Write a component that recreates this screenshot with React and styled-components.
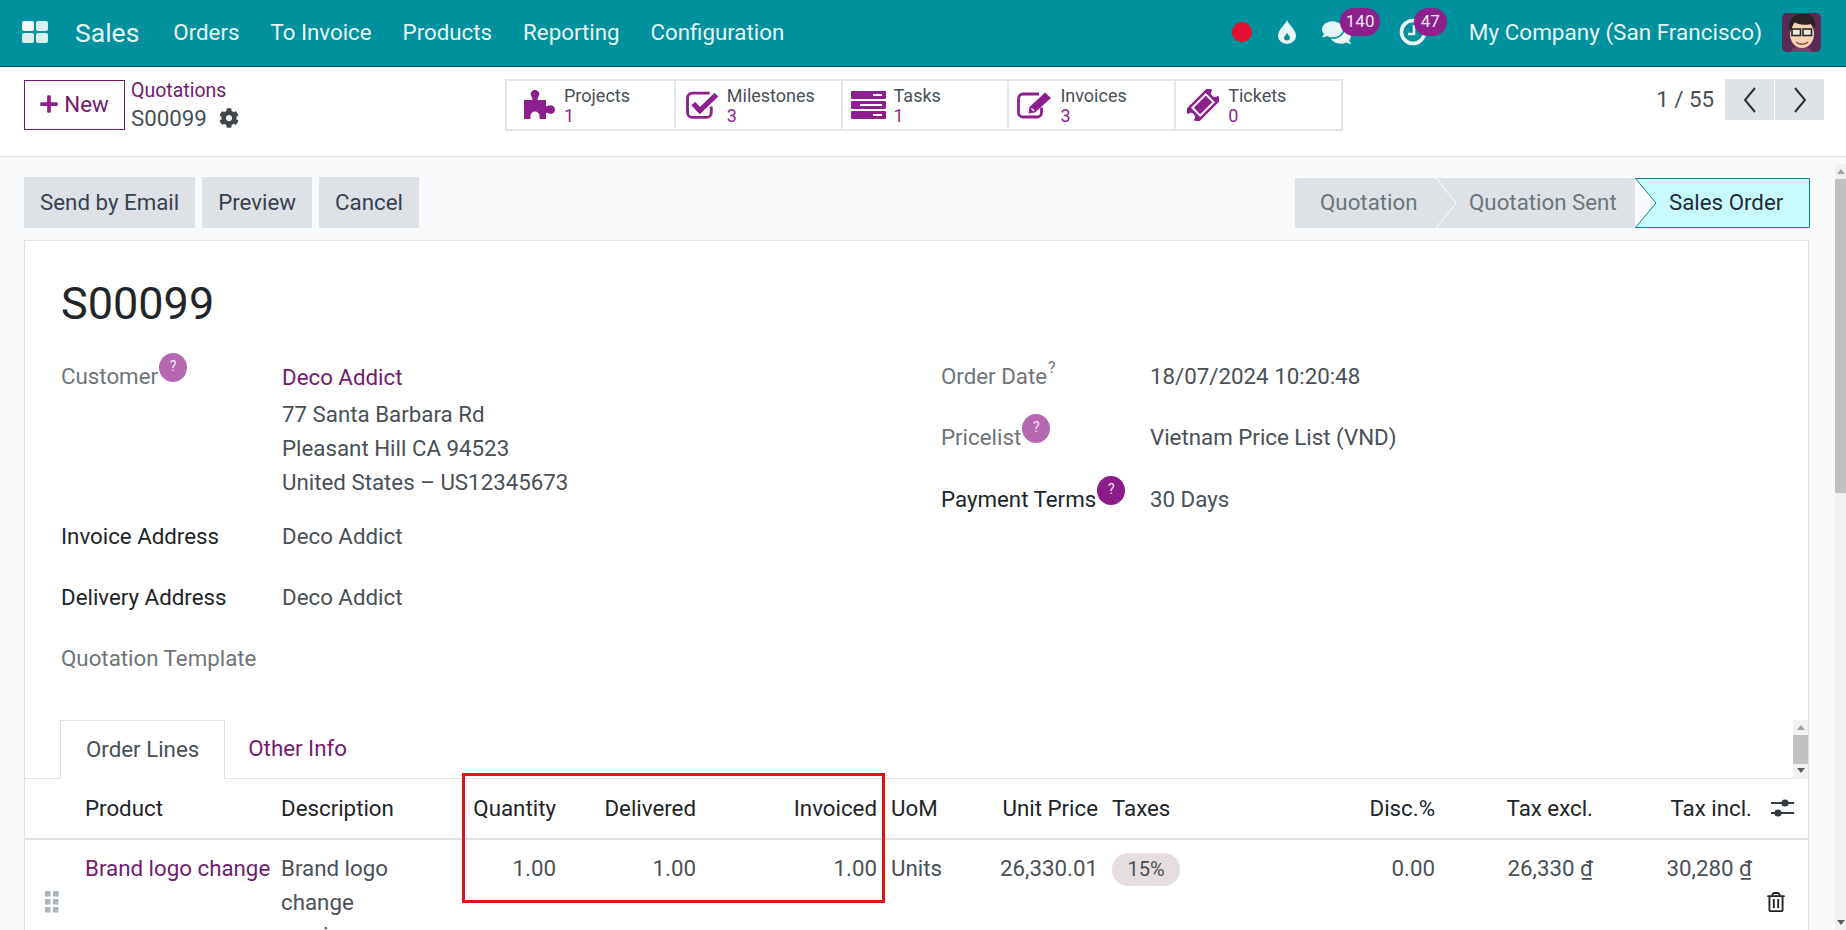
import React from 'react'
import styled, { createGlobalStyle } from 'styled-components'
import { FaPlus, FaCog, FaComments, FaRegTrashAlt } from 'react-icons/fa'

const GlobalStyle = createGlobalStyle`
  html, body {
    margin: 0;
    height: 100%;
    overflow: hidden;
    background: #f9fafb;
    font-family: Roboto, "Liberation Sans", sans-serif;
    font-size: 22.3px;
    color: #495057;
  }
  * { box-sizing: border-box; }
`

const PURPLE = '#8d1f8f'
const LINK = '#741a72'

const Page = styled.div`
  height: 930px;
  display: flex;
  flex-direction: column;
  overflow: hidden;
`

const NavBar = styled.header`
  flex: none;
  height: 67px;
  background: #00919e;
  border-bottom: 1px solid #04565e;
  display: flex;
  align-items: center;
  justify-content: space-between;
  padding: 0 25px 2px 22px;
  color: #e8f6f7;
`

const NavLeft = styled.nav`
  display: flex;
  align-items: center;
  gap: 31px;
`

const AppsSlot = styled.span`
  display: flex;
`

const Brand = styled.span`
  font-size: 26.5px;
  margin: 0 3px 0 -4px;
`

const NavItem = styled.span`
  white-space: nowrap;
`

const CompanyName = styled.span`
  font-size: 22.5px;
  white-space: nowrap;
`

const NavRight = styled.div`
  display: flex;
  align-items: center;
`

const Systray = styled.span`
  position: relative;
  display: flex;
  margin-right: ${p => p.$gap}px;
`

const AvatarSlot = styled.span`
  display: flex;
  margin-left: 20px;
`

const CountBadge = styled.span`
  position: absolute;
  top: ${p => p.$top}px;
  left: ${p => p.$left}px;
  height: 28px;
  padding: 0 ${p => p.$pad}px;
  border-radius: 14px;
  background: ${PURPLE};
  color: #f3e6f3;
  font-size: 17px;
  line-height: 26px;
`

const RedDot = styled.span`
  width: 20px;
  height: 20px;
  border-radius: 50%;
  background: #e3102f;
`

const ControlPanel = styled.section`
  flex: none;
  height: 90px;
  background: #fff;
  border-bottom: 1px solid #dee2e6;
  display: flex;
  align-items: flex-start;
  padding: 12px 22px 0 24px;
`

const PanelLeft = styled.div`
  width: 481px;
  display: flex;
  align-items: flex-start;
`

const NewButton = styled.button`
  width: 101px;
  height: 50px;
  margin-top: 1px;
  background: #fff;
  border: 1px solid ${LINK};
  color: ${LINK};
  font: inherit;
  display: flex;
  align-items: center;
  justify-content: center;
  gap: 5px;
  padding: 0 1px 2px 0;
  svg { color: ${PURPLE}; font-size: 20px; }
`

const Crumbs = styled.div`
  margin-left: 6px;
  display: flex;
  flex-direction: column;
`

const CrumbLink = styled.span`
  color: ${LINK};
  font-size: 19.5px;
  line-height: 24px;
`

const CrumbCurrent = styled.span`
  display: flex;
  align-items: center;
  gap: 12px;
  line-height: 30px;
  svg { font-size: 20px; color: #3f474f; }
`

const ButtonBox = styled.div`
  width: 838px;
  height: 52px;
  display: flex;
  border: 2px solid #e5e7ea;
`

const BoxItem = styled.div`
  flex: 0 0 20%;
  display: flex;
  align-items: center;
  gap: ${p => p.$gap}px;
  padding-left: ${p => p.$inset}px;
  font-size: 18px;
  line-height: 20px;
  & + & { border-left: 2px solid #e5e7ea; }
  svg { flex: none; color: ${PURPLE}; }
`

const BoxText = styled.div`
  display: flex;
  flex-direction: column;
  padding-top: 1px;
`

const BoxCount = styled.span`
  color: ${PURPLE};
`

const Pager = styled.div`
  margin-left: auto;
  display: flex;
  align-items: center;
  gap: 11px;
  height: 41px;
`

const PagerText = styled.span`
  margin-top: -2px;
`

const PagerButtons = styled.div`
  display: flex;
  gap: 1px;
`

const PagerButton = styled.span`
  width: 49px;
  height: 41px;
  background: #dfe2e6;
  display: flex;
  align-items: center;
  justify-content: center;
`

const Content = styled.main`
  flex: 1;
  min-height: 0;
  display: flex;
`

const MainColumn = styled.div`
  width: 1835px;
  padding: 20px 26px 0 24px;
`

const ActionRow = styled.div`
  display: flex;
  justify-content: space-between;
  align-items: flex-end;
  height: 51px;
`

const Actions = styled.div`
  display: flex;
  gap: 7px;
  height: 51px;
`

const ActionButton = styled.button`
  background: #dee2e6;
  border: 0;
  padding: 0 16px 2px;
  font: inherit;
  color: #374151;
`

const StatusBar = styled.div`
  display: flex;
  height: 50px;
  margin-right: -1px;
`

const Step = styled.div`
  position: relative;
  width: ${p => p.$w}px;
  padding-left: ${p => p.$inset}px;
  line-height: 49px;
  background: ${p => (p.$active ? 'transparent' : '#dee2e6')};
  color: ${p => (p.$active ? '#1f2d36' : '#6c757d')};
  white-space: nowrap;
  span { position: relative; }
`

const StepShape = styled.svg`
  position: absolute;
  top: 0;
  left: ${p => p.$left}px;
  z-index: ${p => p.$z};
`

const Sheet = styled.div`
  margin-top: 12px;
  background: #fff;
  border: 1px solid #dee2e6;
  border-bottom: 0;
  height: 700px;
`

const Head = styled.div`
  padding: 33px 0 0 36px;
`

const Title = styled.h1`
  margin: 0;
  font-size: 45px;
  font-weight: 400;
  line-height: 60px;
  color: #212529;
`

const FormGrid = styled.div`
  margin-top: 25px;
  display: grid;
  grid-template-columns: 880px 1fr;
  height: 361px;
`

const Row = styled.div`
  display: grid;
  grid-template-columns: ${p => p.$label}px 1fr;
  line-height: 34px;
  margin-bottom: ${p => p.$after}px;
`

const Label = styled.div`
  display: flex;
  align-items: flex-start;
  color: ${p => (p.$strong ? '#212529' : '#6f7479')};
`

const Help = styled.span`
  width: 28px;
  height: 29px;
  margin: -6px 0 0 1px;
  border-radius: 50%;
  background: ${p => (p.$strong ? '#8d1c8a' : '#b568b0')};
  color: #f6e9f5;
  font-size: 14px;
  line-height: 27px;
  text-align: center;
`

const Sup = styled.sup`
  font-size: 16px;
  line-height: 16px;
  margin: 1px 0 0 1px;
  vertical-align: baseline;
`

const CustomerLink = styled.a`
  color: ${LINK};
  display: block;
  margin: 1px 0 3px;
`

const TabRow = styled.div`
  display: flex;
  justify-content: space-between;
  height: 59px;
  padding-left: 35px;
  border-bottom: 1px solid #dee2e6;
`

const Tabs = styled.div`
  display: flex;
`

const Tab = styled.div`
  height: 59px;
  padding: 0 ${p => (p.$active ? 25 : 23)}px;
  line-height: 57px;
  color: ${p => (p.$active ? '#495057' : LINK)};
  ${p => p.$active && `
    background: #fff;
    border: 1px solid #dee2e6;
    border-bottom: 0;
  `}
`

const Scrollbar = styled.div`
  flex: none;
  width: ${p => p.$w}px;
  margin-top: ${p => p.$top}px;
  background: #f1f1f1;
  display: flex;
  flex-direction: column;
  align-items: center;
  height: ${p => p.$h}px;
`

const Thumb = styled.div`
  align-self: stretch;
  height: ${p => p.$h}px;
  background: #c1c1c1;
`

const ScrollRest = styled.div`
  flex: 1;
`

const Arrow = styled.span`
  width: 0;
  height: 0;
  margin: ${p => p.$m};
  border-left: 4px solid transparent;
  border-right: 4px solid transparent;
  ${p => (p.$down ? 'border-top: 5px solid #606060;' : 'border-bottom: 5px solid #a3a3a3;')}
`

const TableWrap = styled.div`
  position: relative;
`

const Table = styled.table`
  width: 1784px;
  table-layout: fixed;
  border-collapse: collapse;
`

const Col = styled.col`
  width: ${p => p.$w}px;
`

const Th = styled.th`
  height: 60px;
  padding: 0 7px 1px;
  font-weight: 400;
  color: #212529;
  text-align: ${p => (p.$right ? 'right' : 'left')};
  border-bottom: 2px solid #dee2e6;
  white-space: nowrap;
`

const Td = styled.td`
  padding: 12px 7px 10px;
  line-height: 33.5px;
  vertical-align: ${p => (p.$middle ? 'middle' : 'top')};
  text-align: ${p => (p.$right ? 'right' : 'left')};
  color: ${p => (p.$link ? LINK : '#495057')};
  white-space: nowrap;
`

const TaxBadge = styled.span`
  display: inline-block;
  width: 68px;
  height: 33px;
  border-radius: 16px;
  background: #e6dede;
  font-size: 20px;
  line-height: 33px;
  text-align: center;
`

const Annotation = styled.div`
  position: absolute;
  left: 437px;
  top: -6px;
  width: 423px;
  height: 130px;
  border: 3px solid #e31212;
`

const CenterIcon = styled.div`
  display: flex;
  justify-content: center;
  padding-right: ${p => p.$inset || 0}px;
  color: #212529;
`

const AppsIcon = () => (
  <svg width="26" height="22" viewBox="0 0 26 22">
    <rect x="0" y="0" width="12" height="10" rx="2" fill="#f4fbfb" />
    <rect x="14" y="0" width="12" height="10" rx="2" fill="#d9f0f1" />
    <rect x="0" y="12" width="12" height="10" rx="2" fill="#d9f0f1" />
    <rect x="14" y="12" width="12" height="10" rx="2" fill="#d9f0f1" />
  </svg>
)

const DropIcon = () => (
  <svg width="18" height="24" viewBox="0 0 18 24">
    <path d="M9 0 C11 5 18 10 18 15.5 A9 8.5 0 0 1 0 15.5 C0 10 7 5 9 0 Z" fill="#e8f6f7" />
    <path d="M9 13 C10 15 12 16 12 17.5 A3 3 0 0 1 6 17.5 C6 16 8 15 9 13 Z" fill="#00919e" />
  </svg>
)

const ClockIcon = () => (
  <svg width="28" height="28" viewBox="0 0 28 28" fill="none" stroke="#e8f6f7">
    <circle cx="14" cy="14" r="11.5" strokeWidth="3.6" />
    <path d="M15 7 V16 H9" strokeWidth="2.6" />
  </svg>
)

const PuzzleIcon = () => (
  <svg width="32" height="30" viewBox="0 0 32 30" fill={PURPLE}>
    <path d="M0 10 H8 C9 10 8 8 7.5 6.5 A4.2 4.2 0 1 1 14.5 6.5 C14 8 13 10 14 10 H22 V15.5 C22 17 24 16 25 15.6 A4.3 4.3 0 1 1 25 23.5 C24 23 22 22 22 23.5 V29 H16 C15 29 16 27.5 15.5 26 A4.5 4.5 0 0 0 6.5 26 C6 27.5 7 29 6 29 H0 Z" />
  </svg>
)

const CheckIcon = () => (
  <svg width="33" height="29" viewBox="0 0 32 28" fill="none" stroke={PURPLE}>
    <path d="M23 2 H6 A4.5 4.5 0 0 0 1.5 6.5 V21 A4.5 4.5 0 0 0 6 25.5 H20 A4.5 4.5 0 0 0 24.5 21 V15" strokeWidth="2.8" />
    <path d="M7 12 L13.5 19 L29.5 3.5" strokeWidth="5" />
  </svg>
)

const TasksIcon = () => (
  <svg width="35" height="28" viewBox="0 0 35 28">
    <rect y="0" width="35" height="8" rx="1" fill={PURPLE} />
    <rect y="10" width="35" height="8" rx="1" fill={PURPLE} />
    <rect y="20" width="35" height="8" rx="1" fill={PURPLE} />
    <rect x="22" y="3" width="9" height="2" fill="#fff" />
    <rect x="9" y="13" width="22" height="2" fill="#fff" />
    <rect x="22" y="23" width="9" height="2" fill="#fff" />
  </svg>
)

const EditIcon = () => (
  <svg width="35" height="29" viewBox="0 0 35 28" fill="none">
    <path d="M22 2.5 H6 A4.5 4.5 0 0 0 1.5 7 V21 A4.5 4.5 0 0 0 6 25.5 H20 A4.5 4.5 0 0 0 24.5 21 V16" stroke={PURPLE} strokeWidth="2.8" />
    <path d="M28 1 L34 6.5 L18 21 L11.5 22 L12.5 15.5 Z" fill={PURPLE} />
    <path d="M14.5 17 L17 19.5" stroke="#fff" strokeWidth="1.5" />
  </svg>
)

const TicketIcon = () => (
  <svg width="32" height="32" viewBox="0 0 32 32">
    <g transform="rotate(-45 16 16)">
      <path d="M-1 7 H33 V12 A4 4 0 0 0 33 20 V25 H-1 V20 A4 4 0 0 0 -1 12 Z" fill={PURPLE} />
      <rect x="6.5" y="10.5" width="19" height="11" fill="none" stroke="#fff" strokeWidth="2" />
    </g>
  </svg>
)

const Chevron = ({ left }) => (
  <svg width="16" height="26" viewBox="0 0 16 26" fill="none" stroke="#2b3138" strokeWidth="2">
    <path d={left ? 'M13 1 L3 13 L13 25' : 'M3 1 L13 13 L3 25'} />
  </svg>
)

const SlidersIcon = () => (
  <svg width="23" height="20" viewBox="0 0 23 20" fill="#343a40">
    <rect x="0" y="4" width="23" height="2" />
    <circle cx="14" cy="5" r="3.6" />
    <rect x="0" y="14" width="23" height="2" />
    <circle cx="7" cy="15" r="3.6" />
  </svg>
)

const GripIcon = () => (
  <svg width="14" height="22" viewBox="0 0 14 22" fill="#adb5bd">
    {[0, 8, 16].map(y => (
      <React.Fragment key={y}>
        <rect x="0" y={y} width="5.5" height="5.5" />
        <rect x="8" y={y} width="5.5" height="5.5" />
      </React.Fragment>
    ))}
  </svg>
)

const Avatar = () => (
  <svg width="39" height="39" viewBox="0 0 39 39">
    <rect width="39" height="39" rx="5" fill="#5b2a55" />
    <path d="M9 39 C10 31 29 31 30 39 Z" fill="#7a3f6e" />
    <ellipse cx="20" cy="21" rx="12" ry="14" fill="#f4d3b3" />
    <path d="M7 15 C6 4 16 0 24 1 C32 2 34 8 33 15 L29 11 C22 13 15 11 12 9 C11 12 10 14 9 19 Z" fill="#2a2226" />
    <rect x="10" y="16" width="8.5" height="6.5" fill="#efe9dd" stroke="#2a2a2a" strokeWidth="1.6" />
    <rect x="21" y="16" width="8.5" height="6.5" fill="#efe9dd" stroke="#2a2a2a" strokeWidth="1.6" />
    <path d="M14 29 C17 32 23 32 26 29" fill="none" stroke="#8a4a3a" strokeWidth="1.4" />
  </svg>
)

const menu = ['Orders', 'To Invoice', 'Products', 'Reporting', 'Configuration']

const smartButtons = [
  { label: 'Projects', count: 1, icon: <PuzzleIcon />, inset: 17, gap: 8 },
  { label: 'Milestones', count: 3, icon: <CheckIcon />, inset: 10, gap: 8 },
  { label: 'Tasks', count: 1, icon: <TasksIcon />, inset: 8, gap: 8 },
  { label: 'Invoices', count: 3, icon: <EditIcon />, inset: 8, gap: 8 },
  { label: 'Tickets', count: 0, icon: <TicketIcon />, inset: 11, gap: 9 },
]

const columns = [53, 196, 190, 99, 140, 181, 107, 114, 196, 141, 158, 159, 50]

const headers = [
  ['', false],
  ['Product', false],
  ['Description', false],
  ['Quantity', true],
  ['Delivered', true],
  ['Invoiced', true],
  ['UoM', false],
  ['Unit Price', true],
  ['Taxes', false],
  ['Disc.%', true],
  ['Tax excl.', true],
  ['Tax incl.', true],
]

function App() {
  return (
    <Page>
      <GlobalStyle />
      <NavBar>
        <NavLeft>
          <AppsSlot><AppsIcon /></AppsSlot>
          <Brand>Sales</Brand>
          {menu.map(item => <NavItem key={item}>{item}</NavItem>)}
        </NavLeft>
        <NavRight>
          <Systray $gap={26}><RedDot /></Systray>
          <Systray $gap={26}><DropIcon /></Systray>
          <Systray $gap={48}>
            <FaComments size={29} />
            <CountBadge $top={-10} $left={18} $pad={6}>140</CountBadge>
          </Systray>
          <Systray $gap={42}>
            <ClockIcon />
            <CountBadge $top={-10} $left={15} $pad={7}>47</CountBadge>
          </Systray>
          <CompanyName>My Company (San Francisco)</CompanyName>
          <AvatarSlot><Avatar /></AvatarSlot>
        </NavRight>
      </NavBar>

      <ControlPanel>
        <PanelLeft>
          <NewButton><FaPlus />New</NewButton>
          <Crumbs>
            <CrumbLink>Quotations</CrumbLink>
            <CrumbCurrent>S00099 <FaCog /></CrumbCurrent>
          </Crumbs>
        </PanelLeft>
        <ButtonBox>
          {smartButtons.map(b => (
            <BoxItem key={b.label} $inset={b.inset} $gap={b.gap}>
              {b.icon}
              <BoxText>
                <span>{b.label}</span>
                <BoxCount>{b.count}</BoxCount>
              </BoxText>
            </BoxItem>
          ))}
        </ButtonBox>
        <Pager>
          <PagerText>1 / 55</PagerText>
          <PagerButtons>
            <PagerButton><Chevron left /></PagerButton>
            <PagerButton><Chevron /></PagerButton>
          </PagerButtons>
        </Pager>
      </ControlPanel>

      <Content>
        <MainColumn>
          <ActionRow>
            <Actions>
              <ActionButton>Send by Email</ActionButton>
              <ActionButton>Preview</ActionButton>
              <ActionButton>Cancel</ActionButton>
            </Actions>
            <StatusBar>
              <Step $w={141} $inset={25}>
                <span>Quotation</span>
                <StepShape $left={141} $z={1} width="22" height="50" viewBox="0 0 22 50">
                  <path d="M0 0 L20 25 L0 50" fill="#dee2e6" stroke="#fff" strokeWidth="1" />
                </StepShape>
              </Step>
              <Step $w={199} $inset={33}><span>Quotation Sent</span></Step>
              <Step $w={175} $inset={34} $active>
                <StepShape $left={0} width="175" height="50" viewBox="0 0 175 50">
                  <path d="M0.5 0.5 H174.5 V49.5 H0.5 L21 25 Z" fill="#c8fbff" stroke="#0f7f8a" strokeWidth="1" />
                </StepShape>
                <span>Sales Order</span>
              </Step>
            </StatusBar>
          </ActionRow>

          <Sheet>
            <Head>
              <Title>S00099</Title>
              <FormGrid>
                <div>
                  <Row $label={221} $after={20}>
                    <Label>Customer<Help>?</Help></Label>
                    <div>
                      <CustomerLink>Deco Addict</CustomerLink>
                      77 Santa Barbara Rd<br />
                      Pleasant Hill CA 94523<br />
                      United States – US12345673
                    </div>
                  </Row>
                  <Row $label={221} $after={27}>
                    <Label $strong>Invoice Address</Label>
                    <div>Deco Addict</div>
                  </Row>
                  <Row $label={221} $after={27}>
                    <Label $strong>Delivery Address</Label>
                    <div>Deco Addict</div>
                  </Row>
                  <Row $label={221} $after={0}>
                    <Label>Quotation Template</Label>
                  </Row>
                </div>
                <div>
                  <Row $label={209} $after={27}>
                    <Label>Order Date<Sup>?</Sup></Label>
                    <div>18/07/2024 10:20:48</div>
                  </Row>
                  <Row $label={209} $after={28}>
                    <Label>Pricelist<Help>?</Help></Label>
                    <div>Vietnam Price List (VND)</div>
                  </Row>
                  <Row $label={209} $after={0}>
                    <Label $strong>Payment Terms<Help $strong>?</Help></Label>
                    <div>30 Days</div>
                  </Row>
                </div>
              </FormGrid>
            </Head>

            <TabRow>
              <Tabs>
                <Tab $active>Order Lines</Tab>
                <Tab>Other Info</Tab>
              </Tabs>
              <Scrollbar $w={15} $top={0} $h={59}>
                <Arrow $m="5px 0 5px" />
                <Thumb $h={29} />
                <Arrow $down $m="4px 0 0" />
              </Scrollbar>
            </TabRow>

            <TableWrap>
              <Table>
                <colgroup>
                  {columns.map((w, i) => <Col key={i} $w={w} />)}
                </colgroup>
                <thead>
                  <tr>
                    {headers.map(([text, right], i) => <Th key={i} $right={right}>{text}</Th>)}
                    <Th><CenterIcon $inset={4}><SlidersIcon /></CenterIcon></Th>
                  </tr>
                </thead>
                <tbody>
                  <tr>
                    <Td $middle><CenterIcon><GripIcon /></CenterIcon></Td>
                    <Td $link>Brand logo change</Td>
                    <Td>Brand logo<br />change<br />service</Td>
                    <Td $right>1.00</Td>
                    <Td $right>1.00</Td>
                    <Td $right>1.00</Td>
                    <Td>Units</Td>
                    <Td $right>26,330.01</Td>
                    <Td><TaxBadge>15%</TaxBadge></Td>
                    <Td $right>0.00</Td>
                    <Td $right>26,330 ₫</Td>
                    <Td $right>30,280 ₫</Td>
                    <Td $middle><CenterIcon $inset={16}><FaRegTrashAlt size={20} /></CenterIcon></Td>
                  </tr>
                </tbody>
              </Table>
              <Annotation />
            </TableWrap>
          </Sheet>
        </MainColumn>
        <Scrollbar $w={11} $top={7} $h={766}>
          <Arrow $m="5px 0 5px" />
          <Thumb $h={314} />
          <ScrollRest />
          <Arrow $down $m="0 0 5px" />
        </Scrollbar>
      </Content>
    </Page>
  )
}

export default App
